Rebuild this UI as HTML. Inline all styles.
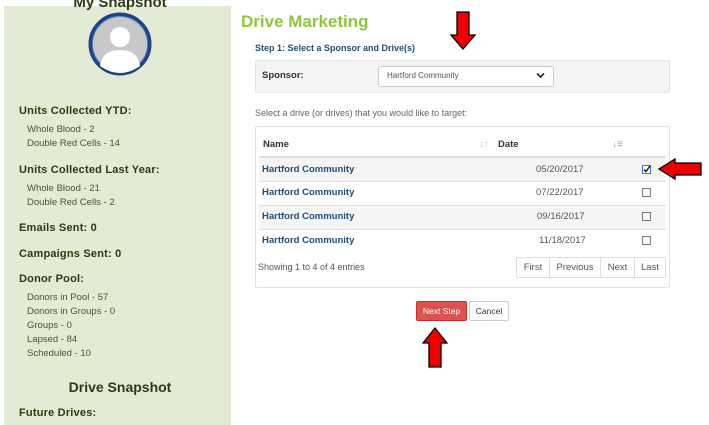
<!DOCTYPE html>
<html><head><style>
*{margin:0;padding:0;box-sizing:border-box}
body{width:709px;height:425px;overflow:hidden;background:#fff;font-family:"Liberation Sans",sans-serif;position:relative}
.a{position:absolute;white-space:nowrap;line-height:1}
.h{font-weight:bold;font-size:11px;color:#2a3a12;letter-spacing:.2px}
.i{font-size:9.5px;color:#4a5236}
.n{font-weight:bold;font-size:9.5px;color:#1f4e79}
.d{font-size:9.5px;color:#555}
.cb{position:absolute;width:9px;height:9px;border:1px solid #777;background:#fff}
.pg{position:absolute;top:257px;height:21px;border:1px solid #ddd;font-size:9.5px;color:#555;text-align:center;line-height:19px;background:#fff}
</style></head><body>
<div style="position:absolute;left:4px;top:6px;width:227px;height:419px;background:#e3ebd4"></div>
<div class="a" style="left:0;width:240px;text-align:center;top:-5px;font-weight:bold;font-size:15px;color:#2d3a16">My Snapshot</div>
<svg style="position:absolute;left:88px;top:12px" width="64" height="64" viewBox="0 0 64 64">
<circle cx="32" cy="32" r="29.5" fill="#c8c8c8" stroke="#1c4587" stroke-width="4"/>
<circle cx="32" cy="32" r="27.5" fill="none" stroke="#6a88b8" stroke-width="1"/>
<circle cx="32" cy="25" r="10" fill="#fff"/>
<path d="M12 54 Q14 38 32 38 Q50 38 52 54 Q42 61 32 61 Q22 61 12 54Z" fill="#fff"/>
</svg>
<div class="a h" style="left:19px;top:106px">Units Collected YTD:</div>
<div class="a i" style="left:27px;top:125px">Whole Blood - 2</div>
<div class="a i" style="left:27px;top:139px">Double Red Cells - 14</div>
<div class="a h" style="left:19px;top:165px">Units Collected Last Year:</div>
<div class="a i" style="left:27px;top:184px">Whole Blood - 21</div>
<div class="a i" style="left:27px;top:198px">Double Red Cells - 2</div>
<div class="a h" style="left:19px;top:223px">Emails Sent: 0</div>
<div class="a h" style="left:19px;top:249px">Campaigns Sent: 0</div>
<div class="a h" style="left:19px;top:274px">Donor Pool:</div>
<div class="a i" style="left:27px;top:293px">Donors in Pool - 57</div>
<div class="a i" style="left:27px;top:307px">Donors in Groups - 0</div>
<div class="a i" style="left:27px;top:321px">Groups - 0</div>
<div class="a i" style="left:27px;top:335px">Lapsed - 84</div>
<div class="a i" style="left:27px;top:349px">Scheduled - 10</div>
<div class="a" style="left:4px;width:232px;text-align:center;top:380px;font-weight:bold;font-size:14px;color:#2d3a16">Drive Snapshot</div>
<div class="a h" style="left:19px;top:408px">Future Drives:</div>

<div class="a" style="left:241px;top:13px;font-weight:bold;font-size:17px;color:#8dc63f">Drive Marketing</div>
<div class="a" style="left:255px;top:44px;font-weight:bold;font-size:9px;color:#1f4e79">Step 1: Select a Sponsor and Drive(s)</div>
<div style="position:absolute;left:255px;top:60px;width:415px;height:33px;background:#f4f4f6;border:1px solid #e4e4e4;border-radius:2px"></div>
<div class="a" style="left:262px;top:71px;font-weight:bold;font-size:9.5px;color:#333">Sponsor:</div>
<div style="position:absolute;left:378px;top:66px;width:176px;height:21px;background:#fff;border:1px solid #ccc;border-radius:3px"></div>
<div class="a" style="left:387px;top:72px;font-size:8px;color:#555">Hartford Community</div>
<svg style="position:absolute;left:536px;top:72px" width="9" height="7"><path d="M1 1.5L4.5 5L8 1.5" fill="none" stroke="#222" stroke-width="1.6"/></svg>
<div class="a" style="left:255px;top:109px;font-size:9px;color:#666">Select a drive (or drives) that you would like to target:</div>
<div style="position:absolute;left:255px;top:126px;width:415px;height:162px;border:1px solid #e2e2e2;border-radius:2px"></div>
<div class="a" style="left:263px;top:140px;font-weight:bold;font-size:9.5px;color:#333">Name</div>
<div class="a" style="left:479px;top:140px;font-size:10px;color:#ccc">↓↑</div>
<div class="a" style="left:498px;top:140px;font-weight:bold;font-size:9.5px;color:#333">Date</div>
<div class="a" style="left:612px;top:140px;font-size:10px;color:#aaa">↓≡</div>
<div style="position:absolute;left:259px;top:156px;width:407px;height:2px;background:#ddd"></div>
<div style="position:absolute;left:259px;top:158px;width:407px;height:23px;background:#f5f5f5"></div>
<div style="position:absolute;left:259px;top:181px;width:407px;height:1px;background:#ddd"></div>
<div style="position:absolute;left:259px;top:205px;width:407px;height:1px;background:#ddd"></div>
<div style="position:absolute;left:259px;top:206px;width:407px;height:23px;background:#f5f5f5"></div>
<div style="position:absolute;left:259px;top:229px;width:407px;height:1px;background:#ddd"></div>
<div class="a n" style="left:262px;top:165px">Hartford Community</div>
<div class="a n" style="left:262px;top:188px">Hartford Community</div>
<div class="a n" style="left:262px;top:212px">Hartford Community</div>
<div class="a n" style="left:262px;top:236px">Hartford Community</div>
<div class="a d" style="left:536px;top:165px">05/20/2017</div>
<div class="a d" style="left:536px;top:188px">07/22/2017</div>
<div class="a d" style="left:537px;top:212px">09/16/2017</div>
<div class="a d" style="left:539px;top:236px">11/18/2017</div>
<div class="cb" style="left:642px;top:165px;border-color:#3a7bd5"></div>
<svg style="position:absolute;left:642px;top:164px" width="10" height="10"><path d="M2 5.5L4 7.5L8 2" fill="none" stroke="#111" stroke-width="1.4"/></svg>
<div class="cb" style="left:642px;top:188px"></div>
<div class="cb" style="left:642px;top:212px"></div>
<div class="cb" style="left:642px;top:236px"></div>
<div class="a" style="left:258px;top:263px;font-size:9px;color:#555">Showing 1 to 4 of 4 entries</div>
<div class="pg" style="left:516px;width:34px;border-radius:2px 0 0 2px">First</div>
<div class="pg" style="left:549px;width:52px">Previous</div>
<div class="pg" style="left:600px;width:35px">Next</div>
<div class="pg" style="left:634px;width:32px;border-radius:0 2px 2px 0">Last</div>
<div class="a" style="left:416px;top:301px;width:51px;height:20px;background:#d9534f;border:1px solid #c9302c;border-radius:2px;color:#fff;font-size:8.5px;text-align:center;line-height:18px">Next Step</div>
<div class="a" style="left:469px;top:301px;width:40px;height:20px;background:#fff;border:1px solid #ccc;border-radius:2px;color:#333;font-size:8.5px;text-align:center;line-height:18px">Cancel</div>
<svg style="position:absolute;left:450px;top:11px" width="26" height="40"><path d="M7 1H19V24H25L13 38L1 24H7Z" fill="#e00" stroke="#000" stroke-width="1.3"/></svg>
<svg style="position:absolute;left:657px;top:158px" width="46" height="22"><path d="M44 5V17H18V21L2 11L18 1V5Z" fill="#e00" stroke="#000" stroke-width="1.3"/></svg>
<svg style="position:absolute;left:422px;top:326px" width="26" height="42"><path d="M7 41H19V17H25L13 2L1 17H7Z" fill="#e00" stroke="#000" stroke-width="1.3"/></svg>
</body></html>
